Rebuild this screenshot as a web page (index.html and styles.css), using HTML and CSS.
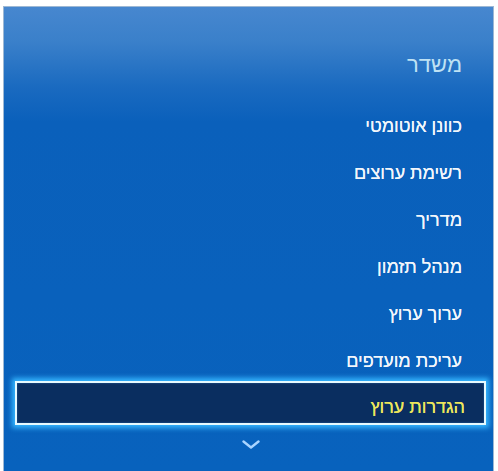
FILE: index.html
```html
<!DOCTYPE html>
<html lang="he" dir="rtl">
<head>
<meta charset="utf-8">
<link rel="stylesheet" href="styles.css">
</head>
<body>
<div class="panel">
  <div class="title">משדר</div>
  <ul class="menu">
    <li class="item">כוונן אוטומטי</li>
    <li class="item">רשימת ערוצים</li>
    <li class="item">מדריך</li>
    <li class="item">מנהל תזמון</li>
    <li class="item">ערוך ערוץ</li>
    <li class="item">עריכת מועדפים</li>
    <li class="item selected">הגדרות ערוץ</li>
  </ul>
  <div class="more">
    <svg width="18" height="9" viewBox="0 0 18 9"><path d="M1.5 1.5 L9 7.5 L16.5 1.5" fill="none" stroke="#a9d4ff" stroke-width="2.4" stroke-linecap="round" stroke-linejoin="round"/></svg>
  </div>
</div>
</body>
</html>
```
FILE: styles.css
```css
html, body {
  margin: 0;
  padding: 0;
  background: #ffffff;
}
body {
  width: 498px;
  height: 471px;
  overflow: hidden;
  font-family: "Liberation Sans", "DejaVu Sans", sans-serif;
}
.panel {
  margin: 6px 4px 0 3px;
  height: 465px;
  box-sizing: border-box;
  border: 1px solid #9db8d4;
  border-bottom: none;
  background: linear-gradient(to bottom, #4787cf 0px, #3a80ca 35px, #1a6ac0 80px, #0a60bb 115px, #0862bd 100%);
  display: flex;
  flex-direction: column;
  padding-top: 34px;
}
.title {
  height: 47px;
  line-height: 47px;
  padding-right: 31px;
  font-size: 22px;
  color: #bfe2f4;
  margin-bottom: 15px;
}
.menu {
  list-style: none;
  margin: 0;
  padding: 0;
}
.item {
  height: 47px;
  line-height: 47px;
  padding-right: 31px;
  font-size: 18px;
  color: #f2f6fb;
  text-shadow: 0 0 0.4px #f2f6fb;
}
.item.selected {
  line-height: 40px;
  padding-top: 4px;
  box-sizing: border-box;
  height: 44px;
  margin: -4px 7px 0 11px;
  padding-right: 19px;
  border: 2px solid #e6faff;
  background: #0a2e60;
  color: #ece65c;
  text-shadow: 0 0 0.4px #ece65c;
  box-shadow: 0 0 5px 3px #35b6ff, inset 0 0 2px #2a6bb0;
}
.more {
  display: flex;
  justify-content: center;
  padding-left: 4px;
  margin-top: 15px;
}
```
